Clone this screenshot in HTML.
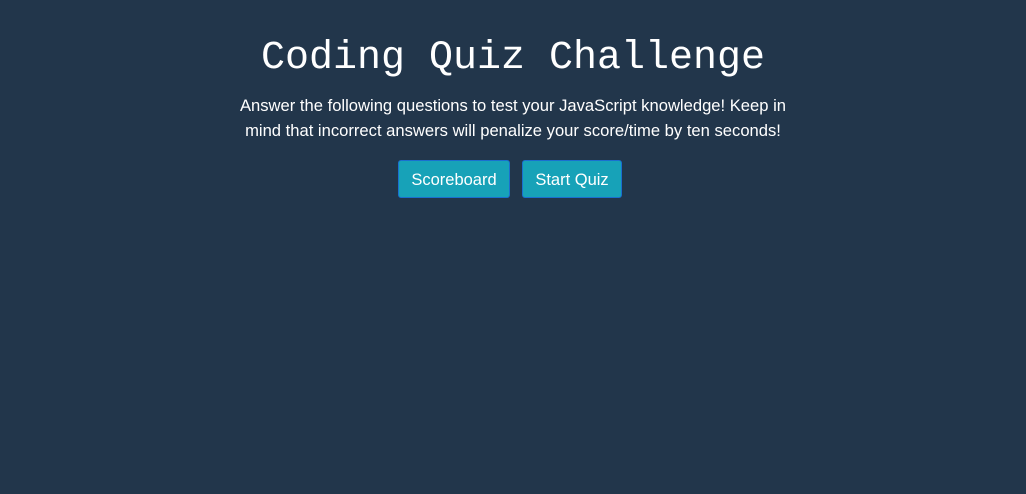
<!DOCTYPE html>
<html><head><style>
body{margin:0;width:1026px;height:494px;background:#22364b;color:#fff;font-family:"Liberation Sans",sans-serif;overflow:hidden}
h1{position:absolute;top:37px;left:0;width:1026px;text-align:center;margin:0;font-family:"Liberation Mono",monospace;font-weight:normal;font-size:40px;line-height:44px}
p{position:absolute;top:93px;left:0;width:1026px;text-align:center;margin:0;font-size:16.6px;line-height:25px}
.b{position:absolute;top:160px;height:38px;box-sizing:border-box;background:#17a2b8;border:1px solid #1a6fd0;border-radius:3px;font-size:16.5px;line-height:39px;text-align:center;color:#fff}
</style></head><body>
<h1>Coding Quiz Challenge</h1>
<p>Answer the following questions to test your JavaScript knowledge! Keep in<br>mind that incorrect answers will penalize your score/time by ten seconds!</p>
<div class="b" style="left:398px;width:112px">Scoreboard</div>
<div class="b" style="left:522px;width:100px">Start Quiz</div>
</body></html>
